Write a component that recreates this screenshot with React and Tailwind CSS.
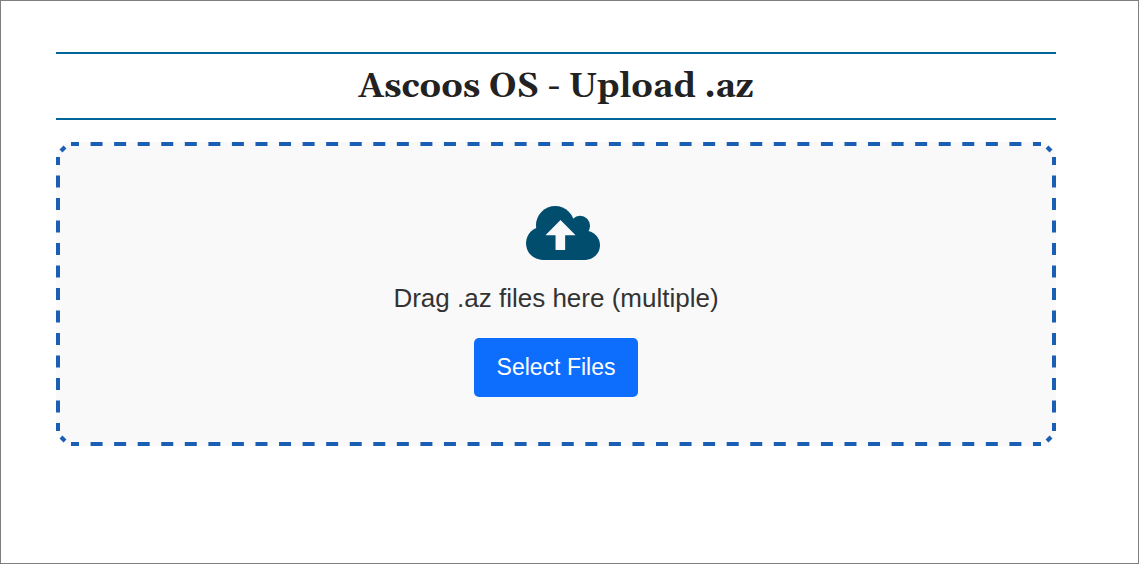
function CloudUpload({ className }) {
  return (
    <svg viewBox="0 0 223 162" className={className} aria-hidden="true">
      <g fill="currentColor">
        <circle cx="88" cy="58" r="58" />
        <circle cx="163" cy="59" r="30" />
        <circle cx="50" cy="112" r="50" />
        <circle cx="179" cy="118" r="44" />
        <path d="M50 60h129v102H50z" />
      </g>
      <path
        d="M104 42l44 44q2 2-1 2h-29v43q0 1-1 1H90q-1 0-1-1V88H61q-3 0-1-2z"
        fill="#f9f9f9"
      />
    </svg>
  );
}

const corners = [
  { x: "0", y: "0", d: "M5 9L9 5" },
  { x: "100%", y: "0", d: "M-9 5L-5 9" },
  { x: "0", y: "100%", d: "M5-9L9-5" },
  { x: "100%", y: "100%", d: "M-9-5L-5-9" },
];

// Even dashes along each side, with a short one on every corner
function DashedOutline() {
  return (
    <svg
      className="pointer-events-none absolute inset-0 h-full w-full stroke-[#1a5fb4] stroke-4"
      fill="none"
      aria-hidden="true"
    >
      <svg x="15" className="w-[calc(100%-30px)]" strokeDasharray="12 11.56" strokeDashoffset="4">
        <line x1="0" y1="2" x2="100%" y2="2" />
        <svg y="100%" overflow="visible">
          <line x1="0" y1="-2" x2="100%" y2="-2" />
        </svg>
      </svg>
      <svg y="15" className="h-[calc(100%-30px)]" strokeDasharray="12 10.5" strokeDashoffset="4">
        <line x1="2" y1="0" x2="2" y2="100%" />
        <svg x="100%" overflow="visible">
          <line x1="-2" y1="0" x2="-2" y2="100%" />
        </svg>
      </svg>
      {corners.map((c) => (
        <svg key={c.d} x={c.x} y={c.y} overflow="visible">
          <path d={c.d} />
        </svg>
      ))}
    </svg>
  );
}

export default function App() {
  return (
    <div className="min-h-screen border border-[#7f7f7f] bg-white pt-[51px] pr-[82px] pb-12 pl-[55px] font-['Liberation_Sans',Arial,sans-serif]">
      <h1 className="mb-[22px] border-y-2 border-[#006699] pt-[13px] pb-[11px] text-center font-[Gelasio,Georgia,'Liberation_Serif',serif] text-[34px] leading-10 font-bold text-[#222222]">
        Ascoos OS - Upload .az
      </h1>

      {/* Drop zone */}
      <div className="relative flex flex-col items-center rounded-2xl bg-[#f9f9f9] px-6 pt-16 pb-[49px]">
        <DashedOutline />
        <CloudUpload className="ml-[14px] h-[54px] w-[74px] text-[#004d6e]" />
        <p className="mt-[22px] mb-6 text-[26px] leading-8 text-[#333333]">Drag .az files here (multiple)</p>
        <button
          type="button"
          className="rounded-[5px] bg-[#0d6efd] px-[23px] py-3 text-[23px] leading-[35px] text-white"
        >
          Select Files
        </button>
      </div>
    </div>
  );
}
